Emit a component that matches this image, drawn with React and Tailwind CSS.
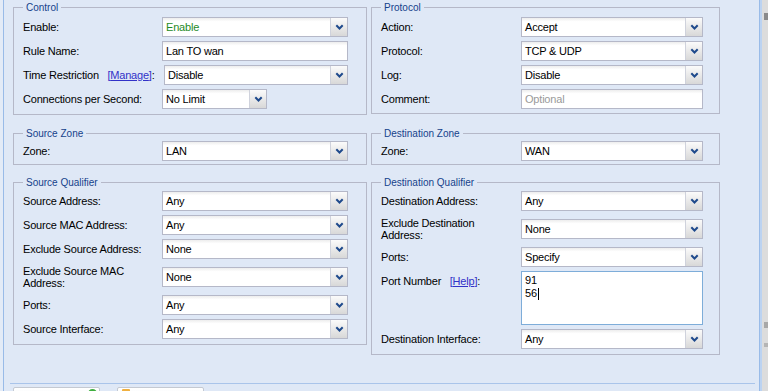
import React from "react";

function Chevron() {
  return (
    <svg width="9" height="6" viewBox="0 0 9 6">
      <path d="M1.3 1.2 L4.5 4.5 L7.7 1.2" fill="none" stroke="#1f4a8c" strokeWidth="2" />
    </svg>
  );
}

function Select({ value, className = "w-[186px]", valueClass = "text-black" }) {
  return (
    <div className={`flex h-[20px] shrink-0 border border-[#b5b8c8] bg-white bg-gradient-to-b from-[#ededed] via-white via-[20%] to-white ${className}`}>
      <span className={`flex-1 pl-[3px] leading-[18px] text-[11px] ${valueClass}`}>{value}</span>
      <div className="flex w-[17px] items-center justify-center border-l border-[#cfd2dc] bg-gradient-to-b from-[#fbfbfb] to-[#d8d8d8]">
        <Chevron />
      </div>
    </div>
  );
}

function Input({ value, placeholder, className = "w-[186px]" }) {
  return (
    <div className={`flex h-[20px] shrink-0 border border-[#b5b8c8] bg-white bg-gradient-to-b from-[#ededed] via-white via-[20%] to-white ${className}`}>
      {value ? (
        <span className="pl-[3px] leading-[18px] text-black">{value}</span>
      ) : (
        <span className="pl-[3px] leading-[18px] text-[#9a9a9a]">{placeholder}</span>
      )}
    </div>
  );
}

function Row({ label, children, lw = "w-[139px]" }) {
  return (
    <div className="flex h-[20px] items-center">
      <div className={`${lw} shrink-0 whitespace-nowrap`}>{label}</div>
      {children}
    </div>
  );
}

function Row2({ l1, l2, children, lw = "w-[139px]" }) {
  return (
    <div className="flex h-[28px] items-center">
      <div className={`${lw} shrink-0 leading-[12px]`}>
        <div>{l1}</div>
        <div>{l2}</div>
      </div>
      {children}
    </div>
  );
}

function Fieldset({ title, children, className }) {
  return (
    <fieldset className={`border border-[#b5b8c8] pl-[9px] ${className}`}>
      <legend className="px-[3px] text-[10px] leading-[13px] tracking-normal text-[#15428b]">{title}</legend>
      <div className="flex flex-col gap-[4px]">{children}</div>
    </fieldset>
  );
}

function Link({ text }) {
  return (
    <span className="text-[#3232c8]">
      [<span className="underline">{text}</span>]
    </span>
  );
}

export default function App() {
  return (
    <div className="flex h-[391px] w-[768px] overflow-hidden bg-[#dfe8f6] font-['Liberation_Sans',Arial,sans-serif] text-[11px] leading-[13px] tracking-[-0.2px] text-black">
      <div className="w-[3px] shrink-0 bg-[#e3ebf7]" />
      <div className="w-[1px] shrink-0 bg-[#99bbe8]" />
      <div className="flex w-[755px] shrink-0 flex-col">
        <div className="flex h-[383px] shrink-0 gap-[4px] pl-[9px] pt-[1px]">
          {/* left column */}
          <div className="flex w-[354px] shrink-0 flex-col">
            <Fieldset title="Control" className="pt-[3px] pb-[5px] mb-[12px]">
              <Row label="Enable:">
                <Select value="Enable" valueClass="text-[#1f8a1f]" />
              </Row>
              <Row label="Rule Name:">
                <Input value="Lan TO wan" />
              </Row>
              <Row
                lw="w-[141px]"
                label={
                  <span>
                    Time Restriction&nbsp;&nbsp;&nbsp;<Link text="Manage" />:
                  </span>
                }
              >
                <Select value="Disable" className="w-[184px]" />
              </Row>
              <Row label="Connections per Second:">
                <Select value="No Limit" className="w-[105px]" />
              </Row>
            </Fieldset>
            <Fieldset title="Source Zone" className="pt-[1px] pb-[3px] mb-[11px]">
              <Row label="Zone:">
                <Select value="LAN" />
              </Row>
            </Fieldset>
            <Fieldset title="Source Qualifier" className="pt-[2px] pb-[5px]">
              <Row label="Source Address:">
                <Select value="Any" />
              </Row>
              <Row label="Source MAC Address:">
                <Select value="Any" />
              </Row>
              <Row label="Exclude Source Address:">
                <Select value="None" />
              </Row>
              <Row2 l1="Exclude Source MAC" l2="Address:">
                <Select value="None" />
              </Row2>
              <Row label="Ports:">
                <Select value="Any" />
              </Row>
              <Row label="Source Interface:">
                <Select value="Any" />
              </Row>
            </Fieldset>
          </div>
          {/* right column */}
          <div className="flex w-[349px] shrink-0 flex-col">
            <Fieldset title="Protocol" className="pt-[3px] pb-[4px] mb-[13px]">
              <Row lw="w-[140px]" label="Action:">
                <Select value="Accept" className="w-[182px]" />
              </Row>
              <Row lw="w-[140px]" label="Protocol:">
                <Select value="TCP & UDP" className="w-[182px]" />
              </Row>
              <Row lw="w-[140px]" label="Log:">
                <Select value="Disable" className="w-[182px]" />
              </Row>
              <Row lw="w-[140px]" label="Comment:">
                <Input placeholder="Optional" className="w-[182px]" />
              </Row>
            </Fieldset>
            <Fieldset title="Destination Zone" className="pt-[1px] pb-[3px] mb-[11px]">
              <Row lw="w-[140px]" label="Zone:">
                <Select value="WAN" className="w-[182px]" />
              </Row>
            </Fieldset>
            <Fieldset title="Destination Qualifier" className="pt-[2px] pb-[5px]">
              <Row lw="w-[140px]" label="Destination Address:">
                <Select value="Any" className="w-[182px]" />
              </Row>
              <Row2 lw="w-[140px]" l1="Exclude Destination" l2="Address:">
                <Select value="None" className="w-[182px]" />
              </Row2>
              <Row lw="w-[140px]" label="Ports:">
                <Select value="Specify" className="w-[182px]" />
              </Row>
              <div className="flex items-start">
                <div className="w-[140px] shrink-0 pt-[3px] leading-[14px]">
                  Port Number&nbsp;&nbsp;&nbsp;<Link text="Help" />:
                </div>
                <div className="h-[54px] w-[182px] border border-[#7eadd9] bg-white pl-[3px] pt-[2px] leading-[13px]">
                  <div>91</div>
                  <div className="flex items-center">
                    56<span className="ml-[1px] inline-block h-[12px] w-[1px] bg-black" />
                  </div>
                </div>
              </div>
              <Row lw="w-[140px]" label="Destination Interface:">
                <Select value="Any" className="w-[182px]" />
              </Row>
            </Fieldset>
          </div>
        </div>
        <div className="ml-[6px] mr-[4px] h-[1px] shrink-0 bg-[#a9c4ea]" />
        <div className="flex gap-[17px] pl-[9px] pt-[3px]">
          <div className="relative h-[20px] w-[87px] rounded-[2px] border border-[#c4c9d2] bg-gradient-to-b from-white to-[#eef1f6]">
            <div className="absolute left-[74px] top-[1px] h-[9px] w-[9px] rounded-full bg-[#3fae3f]" />
          </div>
          <div className="relative h-[20px] w-[87px] rounded-[2px] border border-[#c4c9d2] bg-gradient-to-b from-white to-[#eef1f6]">
            <div className="absolute left-[4px] top-[1px] h-[8px] w-[8px] rounded-[1px] bg-[#f0b040]" />
          </div>
        </div>
      </div>
      <div className="w-[1px] shrink-0 bg-[#99bbe8]" />
      <div className="w-[2px] shrink-0 bg-[#bcd3f1]" />
      <div className="relative flex-1 bg-[#dcdcdc]">
        <div className="absolute left-[2px] top-[13px] h-[7px] w-[4px] bg-[#8a8a8a]" />
        <div className="absolute left-[2px] top-[322px] h-[6px] w-[4px] bg-[#a8a8a8]" />
        <div className="absolute left-[2px] top-[343px] h-[4px] w-[4px] bg-[#b5b5b5]" />
      </div>
    </div>
  );
}
